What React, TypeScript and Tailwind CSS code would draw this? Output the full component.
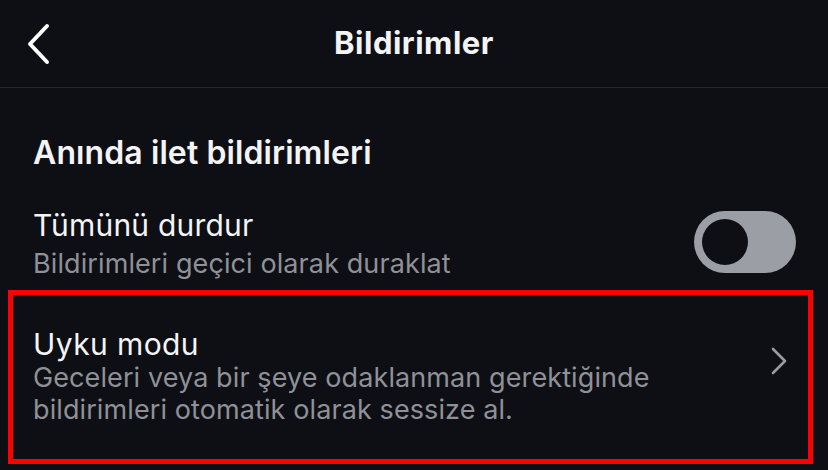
import React from "react";

export default function App() {
  return (
    <div
      className="w-[828px] h-[470px] bg-[#0d0f14] text-[#f4f4f6] overflow-hidden"
      style={{ fontFamily: "Inter, 'Noto Sans', sans-serif" }}
    >
      <header className="h-[88px] grid grid-cols-[1fr_auto_1fr] items-center border-b border-[#25272d]">
        <div className="pl-[25px] flex items-center">
          <svg width="28" height="42" viewBox="0 0 28 42" fill="none">
            <path d="M22 3 L5 21 L22 39" stroke="#ffffff" strokeWidth="4" strokeLinecap="round" strokeLinejoin="round" />
          </svg>
        </div>
        <h1 className="text-[31px] leading-[36px] font-bold tracking-[0.5px] mt-[-2px]">Bildirimler</h1>
        <div />
      </header>

      <section className="pl-[33px]">
        <h2 className="mt-[46px] text-[32px] leading-[38px] font-semibold tracking-[0.1px]">Anında ilet bildirimleri</h2>

        <div className="mt-[35px] flex items-start justify-between pr-[32px]">
          <div>
            <div className="text-[30px] leading-[36px] tracking-[0.2px]">Tümünü durdur</div>
            <div className="mt-[3px] text-[27px] leading-[36px] text-[#8f9197] tracking-[0.1px]">Bildirimleri geçici olarak duraklat</div>
          </div>
          <div className="mt-[4px] w-[102px] h-[62px] rounded-full bg-[#9c9ea5] flex items-center pl-[8px]">
            <div className="w-[46px] h-[46px] rounded-full bg-[#0d0f14]" />
          </div>
        </div>
      </section>

      <div className="mt-[8px] ml-[8px] w-[805px] h-[174px] border-[5px] border-[#ff0000] flex items-start justify-between pl-[20px] pr-[19px] pt-[31px]">
        <div>
          <div className="text-[30px] leading-[36px] tracking-[0.4px]">Uyku modu</div>
          <div className="text-[27px] leading-[32px] text-[#8f9197] tracking-[0.1px]">
            Geceleri veya bir şeye odaklanman gerektiğinde
            <br />
            bildirimleri otomatik olarak sessize al.
          </div>
        </div>
        <svg width="20" height="30" viewBox="0 0 20 30" fill="none" className="mt-[20px]">
          <path d="M4 3 L16 15 L4 27" stroke="#9a9ba1" strokeWidth="2.6" strokeLinecap="round" strokeLinejoin="round" />
        </svg>
      </div>
    </div>
  );
}
